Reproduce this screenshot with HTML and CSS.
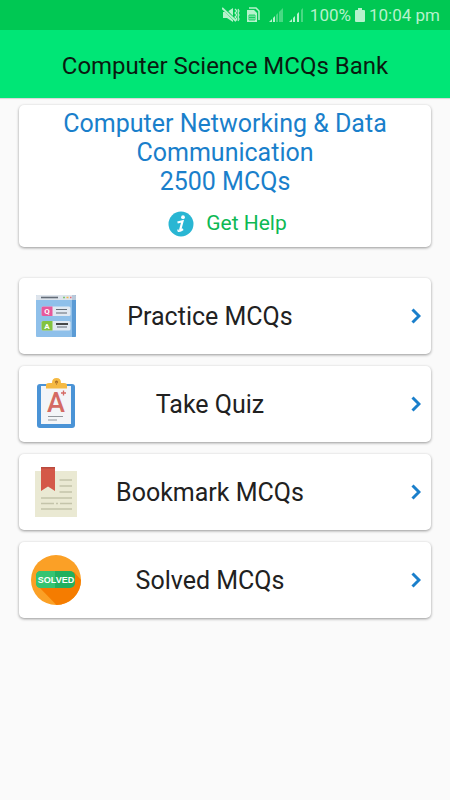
FILE: index.html
```html
<!DOCTYPE html>
<html lang="en">
<head>
<meta charset="utf-8">
<meta name="viewport" content="width=device-width, initial-scale=1">
<title>Computer Science MCQs Bank</title>
<link rel="stylesheet" href="styles.css">
</head>
<body>
<div class="status">
  <svg class="status-icon mute" viewBox="0 0 18 16" aria-hidden="true">
    <path d="M1 5h4l6-4v14l-6-4H1z" fill="currentColor"/>
    <path d="M1 1l13 13" stroke="#00c853" stroke-width="3"/>
    <path d="M0 1l14 13" stroke="currentColor" stroke-width="2"/>
    <path d="M13 2l2 2-2 2 2 2-2 2 2 2-2 2M16 2l1 2-1 2 1 2-1 2 1 2-1 2" fill="none" stroke="currentColor" stroke-width="1.200"/>
  </svg>
  <svg class="status-icon sim" viewBox="0 0 14 16" aria-hidden="true">
    <path d="M3 1h7l3 3v9" fill="none" stroke="currentColor" stroke-width="1.500"/>
    <path d="M1 3h7l3 3v9H1z" fill="currentColor"/>
    <path d="M3 8h6v5H3zM5 8v5M7 8v5M3 10.500h6" fill="none" stroke="#00c853" stroke-width=".8"/>
  </svg>
  <svg class="status-icon signal" viewBox="0 0 16 16" aria-hidden="true">
    <path d="M1 15h3v-3zM5 15h2V9L5 11z" fill="currentColor"/>
    <path d="M8 15h2V6L8 8zM11 15h4V1l-4 4z" fill="currentColor" opacity=".4"/>
  </svg>
  <svg class="status-icon signal" viewBox="0 0 16 16" aria-hidden="true">
    <path d="M1 15h3v-3zM5 15h2V9L5 11zM9 15h2V5L9 7z" fill="currentColor"/>
    <path d="M13 15h2V1l-2 2z" fill="currentColor" opacity=".4"/>
  </svg>
  <span class="percent">100%</span>
  <svg class="status-icon battery" viewBox="0 0 10 16" aria-hidden="true">
    <path d="M3 1h4v2h2q1 0 1 1v10q0 1-1 1H1q-1 0-1-1V4q0-1 1-1h2z" fill="currentColor"/>
  </svg>
  <time>10:04 pm</time>
</div>
<header class="bar"><h1>Computer Science MCQs Bank</h1></header>
<main>
  <section class="card intro">
    <h2>Computer Networking &amp; Data Communication<br>2500 MCQs</h2>
    <a class="help" href="#help">
      <svg viewBox="0 0 26 26" aria-hidden="true">
        <circle cx="13" cy="13" r="12.500" fill="#29b6d3"/>
        <circle cx="15" cy="6.200" r="1.900" fill="#fff"/>
        <path d="M9.500 11.500l5-1.300-2.300 8.600q-.3 1.500 2.800-.6" fill="none" stroke="#fff" stroke-width="2.200"/>
        <path d="M13 19.500q-3.400 2-3-1" fill="none" stroke="#fff" stroke-width="1.400"/>
      </svg>
      <span>Get Help</span>
    </a>
  </section>
  <nav class="menu" aria-label="Main menu">
    <a class="card item" href="#practice">
      <svg class="icon" viewBox="0 0 50 54" aria-hidden="true">
        <rect x="5" y="6" width="40" height="42" rx="1" fill="#8fc0ea"/>
        <path d="M41 6h3q1 0 1 1v40q0 1-1 1h-3z" fill="#5b9bd5"/>
        <path d="M6 6h35v5H5V7q0-1 1-1z" fill="#dde4ec"/>
        <path d="M41 6h3q1 0 1 1v4h-4z" fill="#b9c9da"/>
        <path d="M10 8.500h17" stroke="#646d78" stroke-width="1.600"/>
        <path d="M32 8.500h2" stroke="#7cc576" stroke-width="1.500"/>
        <path d="M35.500 8.500h2" stroke="#f1b84a" stroke-width="1.500"/>
        <path d="M39 8.500h1.500" stroke="#e56b78" stroke-width="1.500"/>
        <rect x="10.500" y="17.500" width="29" height="9.500" rx="1.500" fill="#e1e9f2"/>
        <path d="M12 17.500h9.500V27H12q-1.500 0-1.500-1.500V19q0-1.500 1.500-1.500z" fill="#e6599b"/>
        <rect x="10.500" y="32" width="29" height="9.500" rx="1.500" fill="#e1e9f2"/>
        <path d="M12 32h9.500v9.500H12q-1.500 0-1.500-1.500v-6.500q0-1.500 1.500-1.500z" fill="#82c341"/>
        <path d="M25 20.500h11M25 24h11M26 38h10" stroke="#626b75" stroke-width="1.200"/>
        <path d="M25 35h12" stroke="#111" stroke-width="1.500"/>
        <text class="qa" x="16" y="25">Q</text>
        <text class="qa" x="16" y="39.500">A</text>
      </svg>
      <span class="label">Practice MCQs</span>
      <svg class="chevron" viewBox="0 0 10 16" aria-hidden="true"><path d="M1.500 1.500L8 8l-6.500 6.500"/></svg>
    </a>
    <a class="card item" href="#quiz">
      <svg class="icon" viewBox="0 0 50 54" aria-hidden="true">
        <rect x="6" y="7" width="38" height="44" rx="3" fill="#4a93d6"/>
        <path d="M10 9h30v38H10z" fill="#f3f5f8"/>
        <path d="M15 11.500V8q0-2 3-2h3q0-5 4.500-5T30 6h3q3 0 3 2v3.500z" fill="#f5b942"/>
        <circle cx="25.500" cy="5" r="1.500" fill="#a86d24"/><path d="M25.500 5v3" stroke="#c98b30"/>
        <text class="grade" x="25" y="35">A</text>
        <path d="M30 16h5M32.500 13.500v5" stroke="#d46a64" stroke-width="1.300"/>
        <path d="M17 39.500h15M17 43h9" stroke="#92979d" stroke-width="1.100"/>
      </svg>
      <span class="label">Take Quiz</span>
      <svg class="chevron" viewBox="0 0 10 16" aria-hidden="true"><path d="M1.500 1.500L8 8l-6.500 6.500"/></svg>
    </a>
    <a class="card item" href="#bookmark">
      <svg class="icon" viewBox="0 0 50 54" aria-hidden="true">
        <path d="M4 6h42v46H4z" fill="#eae9d3"/>
        <path d="M10 2h14v24l-7-4.500-7 4.500z" fill="#d45848"/>
        <path d="M10 2h14v1.500H10z" fill="#b94a3e"/>
        <path d="M28.500 15H41M28.500 21H41M28.500 27H41M10 33h31M10 38.500h13M25 38.500h2M29 38.500h12M10 44h31" stroke="#c4c4aa" stroke-width="1.500"/>
      </svg>
      <span class="label">Bookmark MCQs</span>
      <svg class="chevron" viewBox="0 0 10 16" aria-hidden="true"><path d="M1.500 1.500L8 8l-6.500 6.500"/></svg>
    </a>
    <a class="card item" href="#solved">
      <svg class="icon" viewBox="0 0 50 54" aria-hidden="true">
        <circle cx="25" cy="27" r="25" fill="#fba026"/>
        <path d="M7 33L25.500 52A25 25 0 0 0 50 27L43 19z" fill="#f57c00"/>
        <rect x="5" y="18" width="39" height="17" rx="5" fill="#22b05f"/>
        <path d="M10 18h14v17H10q-5 0-5-5v-7q0-5 5-5z" fill="#34c472"/>
        <text class="solved" x="25" y="30">SOLVED</text>
      </svg>
      <span class="label">Solved MCQs</span>
      <svg class="chevron" viewBox="0 0 10 16" aria-hidden="true"><path d="M1.500 1.500L8 8l-6.500 6.500"/></svg>
    </a>
  </nav>
</main>
</body>
</html>
```
FILE: styles.css
```css
* { box-sizing: border-box; }
body {
  margin: 0;
  min-height: 100vh;
  background: #fafafa;
  color: #212121;
  font-family: Roboto, "Liberation Sans", sans-serif;
}
h1, h2 { margin: 0; font-weight: 400; }
a { color: inherit; text-decoration: none; }
.status {
  display: flex;
  justify-content: flex-end;
  align-items: center;
  gap: 4px;
  height: 30px;
  padding: 0 10px;
  background: #00c853;
  color: #b6f2cc;
  font-size: 17px;
}
.status-icon { height: 16px; flex: none; }
.mute { width: 18px; margin-right: 2px; }
.sim { width: 14px; margin-right: 4px; }
.signal { width: 16px; }
.percent { margin-left: 2px; }
.battery { width: 10px; }
.bar {
  display: flex;
  align-items: center;
  justify-content: center;
  height: 68px;
  background: #00e676;
  color: #0a1a10;
  box-shadow: 0 1px 1px #0002;
}
h1 { font-size: 24px; line-height: 28px; padding-top: 4px; }
main { padding: 7px 19px 24px; }
.card {
  background: #fff;
  border-radius: 5px;
  box-shadow: 0 1px 3px #0006;
}
.intro {
  padding: 4px 16px 9px;
  text-align: center;
}
h2 { color: #1a7fcb; font-size: 25px; line-height: 29px; }
.help {
  display: flex;
  justify-content: center;
  align-items: center;
  gap: 12px;
  margin-top: 13px;
  padding-left: 5px;
  color: #0db954;
  font-size: 21px;
  line-height: 29px;
}
.help svg { width: 26px; height: 26px; }
.menu {
  display: grid;
  gap: 12px;
  margin-top: 31px;
}
.item {
  display: grid;
  grid-template-columns: 50px 1fr 10px;
  align-items: center;
  min-height: 76px;
  padding: 0 10px 0 12px;
}
.icon { width: 50px; height: 54px; }
.label {
  padding: 2px 72px 0 0;
  text-align: center;
  white-space: nowrap;
  font-size: 25px;
  line-height: 30px;
}
.chevron { width: 10px; height: 16px; }
.chevron path { fill: none; stroke: #1a7fcb; stroke-width: 3px; }
.qa { fill: #fff; font-size: 8px; font-weight: 700; text-anchor: middle; }
.grade { fill: #d46a64; font-size: 27px; font-weight: 500; text-anchor: middle; }
.solved {
  fill: #fff;
  font-family: "Liberation Sans", sans-serif;
  font-size: 9px;
  font-weight: 700;
  text-anchor: middle;
}
```
